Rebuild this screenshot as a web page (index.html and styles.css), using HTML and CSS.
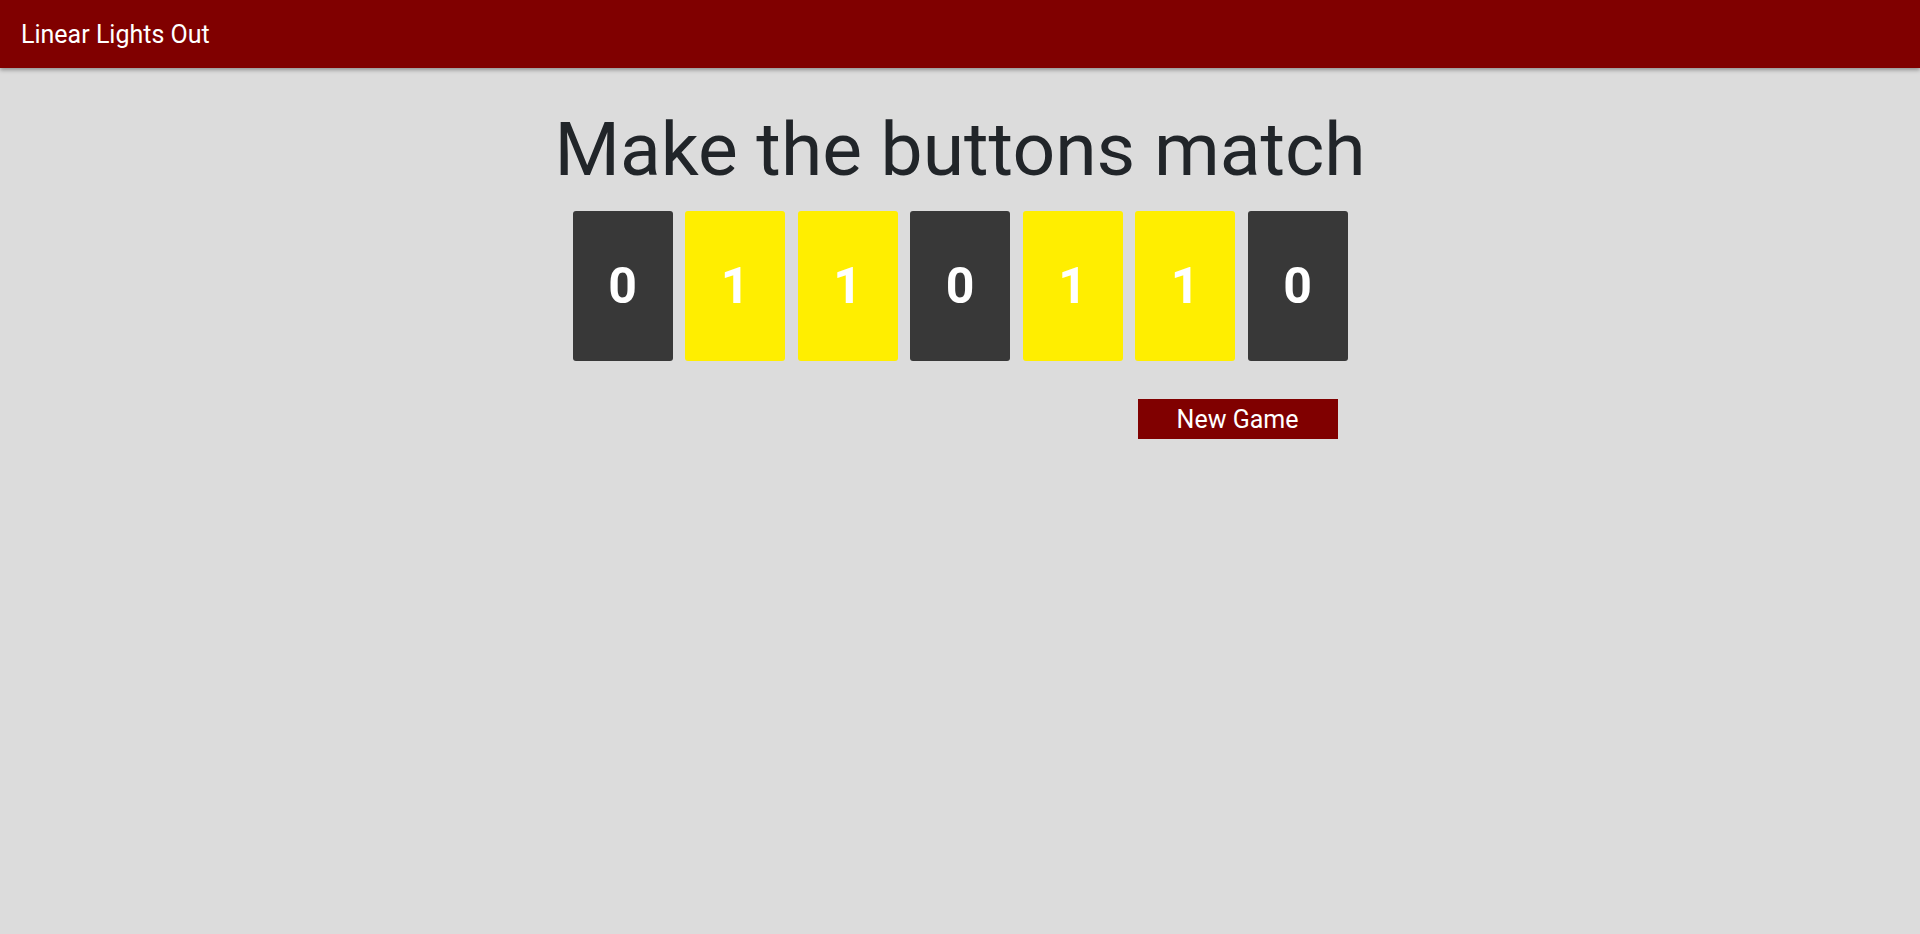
FILE: index.html
```html
<!DOCTYPE html>
<html lang="en">
<head>
<meta charset="utf-8">
<title>Linear Lights Out</title>
<link rel="stylesheet" href="styles.css">
</head>
<body>
<header class="navbar">
  <span class="brand">Linear Lights Out</span>
</header>
<main class="game">
  <h1 class="title">Make the buttons match</h1>
  <div class="board">
    <div class="tiles">
      <button class="tile off">0</button>
      <button class="tile on">1</button>
      <button class="tile on">1</button>
      <button class="tile off">0</button>
      <button class="tile on">1</button>
      <button class="tile on">1</button>
      <button class="tile off">0</button>
    </div>
    <div class="actions">
      <button class="new-game">New Game</button>
    </div>
  </div>
</main>
</body>
</html>
```
FILE: styles.css
```css
html, body {
  margin: 0;
  padding: 0;
}
body {
  background: #dcdcdc;
  font-family: Roboto, "Liberation Sans", sans-serif;
  color: #212529;
  min-height: 934px;
}
.navbar {
  height: 68px;
  background: #800000;
  display: flex;
  align-items: center;
  padding: 0 21px;
  box-shadow: 0 2px 4px rgba(0, 0, 0, 0.35);
  position: relative;
}
.brand {
  color: #fff;
  font-size: 25px;
  line-height: 1;
}
.game {
  display: flex;
  flex-direction: column;
  align-items: center;
}
.title {
  margin: 35.5px 0 17.5px;
  font-size: 75px;
  font-weight: 400;
  line-height: 1.2;
}
.board {
  width: 775px;
  display: flex;
  flex-direction: column;
}
.tiles {
  display: flex;
  gap: 12.5px;
}
.tile {
  width: 100px;
  height: 150px;
  border: none;
  border-radius: 3px;
  padding: 0;
  font-family: Roboto, "Liberation Sans", sans-serif;
  font-size: 50px;
  font-weight: 700;
  color: #fff;
}
.tile.off { background: #383838; }
.tile.on { background: #ffee00; }
.actions {
  display: flex;
  justify-content: flex-end;
  padding-right: 10px;
  margin-top: 38px;
}
.new-game {
  width: 200px;
  height: 40px;
  border: none;
  background: #800000;
  color: #fff;
  font-family: Roboto, "Liberation Sans", sans-serif;
  font-size: 25px;
  padding: 0;
}
```
